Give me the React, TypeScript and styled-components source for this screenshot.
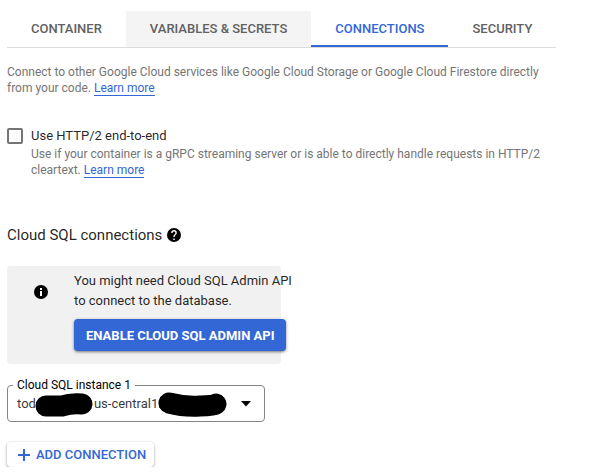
import React, { useState } from "react";
import styled, { createGlobalStyle } from "styled-components";

const BLUE = "#3367d6";

const GlobalStyle = createGlobalStyle`
  *, *::before, *::after { box-sizing: border-box; }
  body {
    margin: 0;
    background: #fff;
    color: rgba(0, 0, 0, 0.87);
    font-family: Roboto, "Liberation Sans", sans-serif;
    font-size: 13px;
    line-height: 20px;
  }
  button, select, input { font-family: inherit; }
`;

const Page = styled.main`
  max-width: 556px;
  padding: 11px 0 0 7px;
`;

const TabBar = styled.nav`
  display: flex;
  border-bottom: 1px solid #dcdcdc;
`;

const Tab = styled.button<{ $active?: boolean; $shaded?: boolean }>`
  height: 36px;
  padding: 0 24px;
  border: 0;
  box-shadow: ${(p) => (p.$active ? `inset 0 -2px ${BLUE}` : "none")};
  background: ${(p) => (p.$shaded ? "#f4f4f4" : "transparent")};
  color: ${(p) => (p.$active ? BLUE : "#616161")};
  font-size: 13px;
  font-weight: 500;
  line-height: 20px;
  white-space: nowrap;
  cursor: pointer;
`;

const Note = styled.p`
  margin: 0;
  color: #757575;
  font-size: 12px;
  line-height: 16px;
`;

const Intro = styled(Note)`
  margin-top: 16px;
`;

const Link = styled.a`
  border-bottom: 1px solid ${BLUE};
  color: ${BLUE};
  text-decoration: none;
`;

const Option = styled.div`
  display: grid;
  grid-template-columns: 16px 1fr;
  column-gap: 8px;
  margin-top: 30px;
`;

const Checkbox = styled.input`
  appearance: none;
  width: 16px;
  height: 16px;
  margin: 2px 0 0;
  border: 2px solid #757575;
  border-radius: 2px;
  background: #fff;

  &:checked {
    border-color: ${BLUE};
    background: ${BLUE};
  }
`;

const OptionNote = styled(Note)`
  grid-column: 2;
`;

const SectionTitle = styled.h2`
  display: flex;
  align-items: center;
  gap: 5px;
  margin: 47px 0 0;
  font-size: 15px;
  font-weight: 400;
  line-height: 20px;
`;

const Banner = styled.section`
  display: flex;
  align-items: flex-start;
  gap: 26px;
  width: 274px;
  margin-top: 21px;
  padding: 5px 0 13px 27px;
  border-radius: 4px;
  background: #f1f1f1;
`;

const BannerIcon = styled.span`
  display: flex;
  padding-top: 14px;
`;

const BannerBody = styled.div`
  flex: none;
  width: 224px;
`;

const BannerText = styled.p`
  margin: 0 0 8px;
`;

const PrimaryButton = styled.button`
  display: block;
  height: 32px;
  padding: 0 12px;
  border: 0;
  border-radius: 4px;
  background: ${BLUE};
  box-shadow: 0 1px 3px rgba(0, 0, 0, 0.5);
  color: #fff;
  font-size: 13px;
  font-weight: 700;
  white-space: nowrap;
  cursor: pointer;
`;

const Field = styled.fieldset`
  position: relative;
  width: 258px;
  min-width: 0;
  margin: 13px 0 0;
  padding: 0 12px 0 5px;
  border: 1px solid #80868b;
  border-radius: 4px;
`;

const Legend = styled.legend`
  height: 16px;
  padding: 0 4px;
  color: #000;
  font-size: 12px;
  line-height: 16px;
`;

const SelectRow = styled.div`
  display: flex;
  align-items: center;
  height: 28px;
  padding: 0 0 7px 4px;
`;

const Select = styled.select`
  appearance: none;
  flex: 1;
  min-width: 0;
  height: 20px;
  padding: 0;
  border: 0;
  background: transparent;
  color: rgba(0, 0, 0, 0.8);
  font-size: 13px;
  line-height: 20px;
`;

const Redaction = styled.svg`
  position: absolute;
  top: -1px;
  left: 27px;
  pointer-events: none;
`;

const AddButton = styled.button`
  display: flex;
  align-items: center;
  gap: 6px;
  height: 25px;
  margin-top: 20px;
  padding: 0 8px 0 11px;
  border: 0;
  border-radius: 4px;
  background: #fff;
  box-shadow: 0 1px 3px rgba(0, 0, 0, 0.4);
  color: ${BLUE};
  font-size: 13px;
  font-weight: 500;
  white-space: nowrap;
  cursor: pointer;
`;

const HelpIcon = () => (
  <svg width="14" height="14" viewBox="2 2 20 20" role="img" aria-label="Help">
    <path d="M12 2a10 10 0 1 0 0 20 10 10 0 0 0 0-20zm1 17h-2v-2h2v2zm2.070-7.750-.9.920C13.450 12.900 13 13.500 13 15h-2v-.5c0-1.100.450-2.100 1.170-2.830l1.240-1.260c.370-.360.590-.860.590-1.410a2 2 0 1 0-4 0H8a4 4 0 1 1 8 0c0 .880-.360 1.680-.930 2.250z" />
  </svg>
);

const InfoIcon = () => (
  <svg width="14" height="14" viewBox="0 0 14 14" role="img" aria-label="Information">
    <circle cx="7" cy="7" r="7" />
    <path fill="#fff" d="M6 3h2v2H6zM6 6h2v5H6z" />
  </svg>
);

const tabs = ["CONTAINER", "VARIABLES & SECRETS", "CONNECTIONS", "SECURITY"];
const blank = (count: number) => "\u00a0".repeat(count);
const instance = `tod${blank(18)}us-central1:`;

export default function App() {
  const [active, setActive] = useState("CONNECTIONS");
  return (
    <>
      <GlobalStyle />
      <Page>
        <TabBar aria-label="Service settings">
          {tabs.map((name) => (
            <Tab
              key={name}
              type="button"
              $active={name === active}
              $shaded={name === "VARIABLES & SECRETS"}
              onClick={() => setActive(name)}
            >
              {name}
            </Tab>
          ))}
        </TabBar>
        <Intro>
          Connect to other Google Cloud services like Google Cloud Storage or Google Cloud
          Firestore directly from your code. <Link href="#connections">Learn more</Link>
        </Intro>
        <Option>
          <Checkbox type="checkbox" id="http2" />
          <label htmlFor="http2">Use HTTP/2 end-to-end</label>
          <OptionNote>
            Use if your container is a gRPC streaming server or is able to directly handle
            requests in HTTP/2 cleartext. <Link href="#http2">Learn more</Link>
          </OptionNote>
        </Option>
        <SectionTitle>
          Cloud SQL connections <HelpIcon />
        </SectionTitle>
        <Banner>
          <BannerIcon>
            <InfoIcon />
          </BannerIcon>
          <BannerBody>
            <BannerText>You might need Cloud SQL Admin API to connect to the database.</BannerText>
            <PrimaryButton type="button">ENABLE CLOUD SQL ADMIN API</PrimaryButton>
          </BannerBody>
        </Banner>
        <Field>
          <Legend>
            <label htmlFor="instance">Cloud SQL instance 1</label>
          </Legend>
          <SelectRow>
            <Select id="instance">
              <option>{instance}</option>
            </Select>
            <svg width="12" height="6" viewBox="0 0 12 6" aria-hidden="true">
              <path d="M1 0h10L6 5.500z" />
            </svg>
          </SelectRow>
          <Redaction width="194" height="26" viewBox="0 0 194 26" aria-hidden="true">
            <g fill="none" stroke="#000" strokeLinecap="round" strokeLinejoin="round" strokeWidth="21">
              <path d="M11 14H27Q36 11 47 12" />
              <path d="M134 11Q149 15 165 14Q178 14 181 12" />
            </g>
          </Redaction>
        </Field>
        <AddButton type="button">
          <svg width="12" height="12" viewBox="0 0 12 12" aria-hidden="true">
            <path d="M6 0v12M0 6h12" stroke={BLUE} strokeWidth="2" />
          </svg>
          ADD CONNECTION
        </AddButton>
      </Page>
    </>
  );
}
